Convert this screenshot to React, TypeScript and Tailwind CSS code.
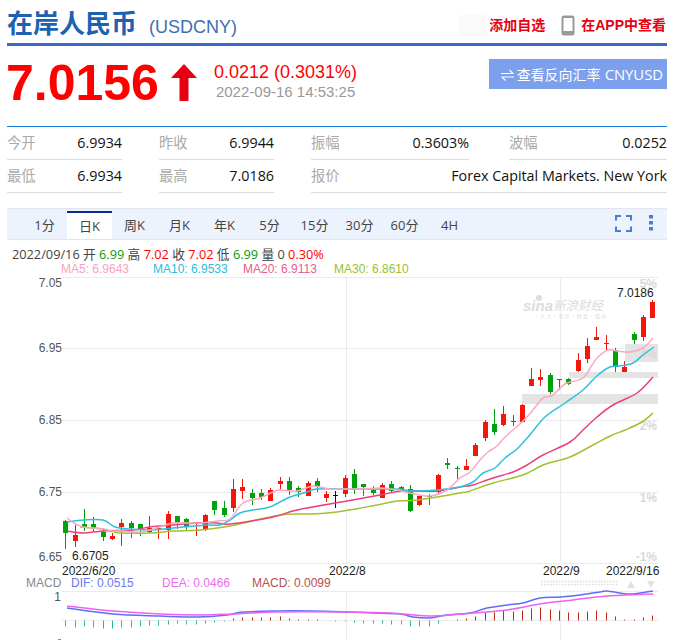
import React from 'react';

type Candle = [number, number, number, number, string];

const R = '#f5150a';
const G = '#00a10a';
const K = '#111111';

// body top, body bottom, wick top, wick bottom, colour (page pixels)
const candles: Candle[] = [
  [521, 533, 520, 549, G], [535, 541, 525, 547, R], [524, 528, 509, 531, G], [524, 528, 517, 532, G],
  [532, 537, 528, 541, G], [536, 539, 533, 540, R], [523, 527, 519, 546, R], [523, 528, 521, 538, G],
  [524, 529, 524, 536, G], [528, 532, 516, 533, R], [528, 530, 528, 539, R], [514, 530, 511, 539, R],
  [516, 523, 516, 529, G], [519, 527, 518, 531, G], [522, 523, 522, 536, R], [515, 530, 514, 531, R],
  [501, 510, 501, 515, G], [508, 515, 501, 517, G], [489, 508, 479, 512, R], [487, 491, 479, 499, R],
  [493, 498, 489, 505, G], [493, 497, 489, 500, G], [490, 501, 488, 501, R], [481, 484, 477, 489, R],
  [481, 490, 477, 495, G], [488, 492, 486, 497, G], [483, 496, 481, 496, R], [481, 486, 478, 492, G],
  [494, 498, 491, 502, R], [495, 496, 491, 508, K], [478, 494, 475, 497, R], [474, 490, 469, 494, G],
  [484, 487, 484, 496, G], [490, 493, 486, 495, G], [485, 498, 483, 498, R], [484, 491, 481, 492, G],
  [487, 491, 486, 492, G], [489, 511, 485, 512, G], [496, 505, 496, 506, R], [496, 497, 494, 505, G],
  [475, 492, 474, 493, R], [463, 465, 458, 469, G], [468, 469, 466, 479, G], [466, 470, 459, 470, R],
  [445, 456, 443, 456, R], [422, 438, 420, 441, R], [424, 432, 409, 435, G], [414, 425, 406, 426, R],
  [421, 422, 415, 426, R], [405, 422, 404, 422, R], [379, 386, 368, 386, R], [377, 380, 369, 386, R],
  [375, 392, 373, 394, G], [379, 380, 379, 390, R], [379, 384, 378, 385, G], [360, 371, 353, 372, R],
  [346, 359, 338, 363, R], [337, 340, 327, 340, R], [343, 344, 335, 350, R], [350, 366, 348, 372, G],
  [367, 372, 361, 372, R], [334, 340, 332, 344, G], [317, 337, 315, 341, R], [302, 318, 300, 318, R],
];

const ma5 = '67,518 74,523 83,527 93,528 103,529 113,531 123,531 140,532 150,530 160,527 173,523 200,523 217,521 230,519 243,503 260,498 273,492 280,490 297,491 313,486 330,489 347,489 363,489 380,488 397,490 410,493 430,496 447,490 460,478 470,472 480,460 488,452 497,446 505,437 522,422 533,410 543,398 553,395 565,384 583,378 592,365 598,357 608,350 617,351 630,352 643,348 653,338';
const ma10 = '67,522 83,520 103,520 115,527 130,529 150,530 183,527 207,525 220,525 230,520 240,513 253,510 270,507 290,497 307,492 317,489 347,489 373,489 397,489 413,491 437,490 460,487 473,482 483,473 495,468 505,458 517,449 528,437 545,417 565,403 583,390 598,375 610,367 620,366 633,363 643,355 654,347';
const ma20 = '67,531 83,533 103,531 133,530 150,527 173,525 200,523 217,523 230,524 273,517 297,510 347,501 380,495 403,491 437,491 460,487 473,485 490,479 513,472 527,465 543,455 570,442 583,430 597,417 613,405 637,393 653,377';
const ma30 = '80,527 103,529 120,533 150,533 173,531 200,530 230,526 280,515 310,514 337,512 377,505 397,501 417,500 460,493 470,491 493,483 523,475 543,465 570,457 593,445 610,436 625,430 642,422 653,413';
const dif = '67,608 113,614 160,616 198,617 227,615 243,612 277,611 310,611 347,612 373,613 400,614 413,617 430,618 447,615 470,613 487,608 507,605 523,603 540,598 560,597 580,595 600,592 607,591 627,594 640,593 653,591';
const dea = '67,606 113,611 160,614 200,615 233,614 277,612 340,612 390,613 433,616 473,613 507,610 540,604 573,600 607,596 653,594';

// macd bar heights, + is up (red), - is down (green)
const macd = [-6, -7, -6, -7, -8, -8, -7, -7, -6, -5, -5, -4, -3, -4, -4, -3, -2, -1, 2, 3, 3, 3, 3, 4, 2, 1, 1, 1, 0, -1, -1, -2, -3, -3, -3, -4, -4, -6, -6, -6, -3, 0, 1, 2, 4, 8, 8, 10, 9, 10, 12, 13, 11, 10, 8, 8, 9, 10, 8, 4, 1, 1, 3, 5];

const cx = (i: number) => Math.round(65.3 + 9.317 * i) + 0.5;

// catmull-rom through the sampled points, the lines in the chart are smoothed
function smooth(points: string) {
  const p = points.split(' ').map((s) => s.split(',').map(Number));
  let d = `M${p[0][0]} ${p[0][1]}`;
  for (let i = 0; i < p.length - 1; i++) {
    const a = p[Math.max(i - 1, 0)];
    const b = p[i];
    const c = p[i + 1];
    const e = p[Math.min(i + 2, p.length - 1)];
    const c1x = b[0] + (c[0] - a[0]) / 6;
    const c1y = b[1] + (c[1] - a[1]) / 6;
    const c2x = c[0] - (e[0] - b[0]) / 6;
    const c2y = c[1] - (e[1] - b[1]) / 6;
    d += `C${c1x.toFixed(1)} ${c1y.toFixed(1)} ${c2x.toFixed(1)} ${c2y.toFixed(1)} ${c[0]} ${c[1]}`;
  }
  return d;
}

const stats = [
  { label: '今开', value: '6.9934', label2: '最低', value2: '6.9934' },
  { label: '昨收', value: '6.9944', label2: '最高', value2: '7.0186' },
];

const tabs = ['1分', '日K', '周K', '月K', '年K', '5分', '15分', '30分', '60分', '4H'];

function Chart() {
  return (
    <svg width="681" height="363" viewBox="0 277 681 363" className="block font-['Liberation_Sans',sans-serif]">
      {/* grid */}
      {[277, 348, 420, 492, 563, 591, 620].map((y) => (
        <line key={y} x1="62" x2="658" y1={y + 0.5} y2={y + 0.5} stroke="#ebebeb" />
      ))}
      <line x1="346.5" x2="346.5" y1="277" y2="563" stroke="#ebebeb" />
      <line x1="560.5" x2="560.5" y1="277" y2="563" stroke="#ebebeb" />
      <line x1="346.5" x2="346.5" y1="591" y2="640" stroke="#ebebeb" />
      <line x1="560.5" x2="560.5" y1="591" y2="640" stroke="#ebebeb" />

      {/* shaded price bands */}
      <rect x="522" y="394" width="136" height="10" fill="#e4e4e4" />
      <rect x="569" y="372" width="89" height="6" fill="#e4e4e4" />
      <rect x="625" y="344" width="33" height="18" fill="#e4e4e4" />

      {/* watermark */}
      <g fill="#dcdcdc">
        <circle cx="539" cy="298" r="3" />
        <text x="523" y="311" fontSize="15" fontWeight="700" fontStyle="italic">sina</text>
        <text x="553" y="310" fontSize="12.5" fontStyle="italic" fontFamily="'Noto Sans CJK SC',sans-serif">新浪财经</text>
        <text x="534" y="318" fontSize="5" fontFamily="'Noto Sans CJK SC',sans-serif">· 大 大 · 资 讯 · 财 富 · 股 市</text>
      </g>

      {/* right percent axis */}
      <g fill="#d8d8d8" fontSize="12" fontWeight="700" textAnchor="end">
        <text x="657" y="288">5%</text>
        <text x="657" y="358">4%</text>
        <text x="657" y="430">2%</text>
        <text x="657" y="502">1%</text>
        <text x="657" y="561">-1%</text>
      </g>

      {/* left price axis */}
      <g fill="#555" fontSize="12" textAnchor="end">
        <text x="62" y="287">7.05</text>
        <text x="62" y="352">6.95</text>
        <text x="62" y="424">6.85</text>
        <text x="62" y="496">6.75</text>
        <text x="62" y="561">6.65</text>
        <text x="61" y="601">1</text>
      </g>
      <rect x="58" y="639" width="3" height="1" fill="#888" />

      {/* candles */}
      {candles.map(([t, b, h, l, c], i) => (
        <g key={i}>
          <line x1={cx(i)} x2={cx(i)} y1={h} y2={l} stroke={c} />
          <rect x={cx(i) - 2.5} y={t} width="5" height={b - t} fill={c} />
        </g>
      ))}

      <path d={smooth(ma30)} fill="none" stroke="#a2c12e" strokeWidth="1.5" />
      <path d={smooth(ma20)} fill="none" stroke="#ec4079" strokeWidth="1.5" />
      <path d={smooth(ma10)} fill="none" stroke="#2cc0de" strokeWidth="1.5" />
      <path d={smooth(ma5)} fill="none" stroke="#f9a9c4" strokeWidth="1.5" />

      {/* extremes */}
      <text x="617" y="297" fontSize="12" fill="#222">7.0186</text>
      <text x="72" y="560" fontSize="12" fill="#222">6.6705</text>

      {/* date axis */}
      <g fontSize="12" fill="#222">
        <text x="62" y="575">2022/6/20</text>
        <text x="329" y="575">2022/8</text>
        <text x="543" y="575">2022/9</text>
        <text x="606" y="575">2022/9/16</text>
      </g>

      {/* macd legend */}
      <g fontSize="12">
        <text x="26" y="587" fill="#888">MACD</text>
        <text x="71" y="587" fill="#6a78f0">DIF: 0.0515</text>
        <text x="162" y="587" fill="#ee6cf0">DEA: 0.0466</text>
        <text x="252" y="587" fill="#b55050">MACD: 0.0099</text>
      </g>

      {/* range slider bits */}
      <line x1="541" x2="617" y1="581.5" y2="581.5" stroke="#dcdcdc" strokeWidth="1.5" strokeDasharray="1.5 1.5" />
      <line x1="541" x2="617" y1="584.5" y2="584.5" stroke="#dcdcdc" strokeWidth="1.5" strokeDasharray="1.5 1.5" />
      <polygon points="631,581 635,588 627,588" fill="#e2e2e2" />
      <polygon points="647,581 655,581 651,588" fill="#e2e2e2" />

      {/* macd */}
      {macd.map((v, i) =>
        v === 0 ? null : (
          <line
            key={i}
            x1={cx(i)}
            x2={cx(i)}
            y1="620.5"
            y2={620.5 - v}
            stroke={v > 0 ? '#c0280f' : '#20c08a'}
          />
        ),
      )}
      <path d={smooth(dif)} fill="none" stroke="#5f6ef5" strokeWidth="1.5" />
      <path d={smooth(dea)} fill="none" stroke="#f062f0" strokeWidth="1.5" />
    </svg>
  );
}

export default function App() {
  return (
    <div className="w-[681px] h-[640px] overflow-hidden bg-white font-['Liberation_Sans','Noto_Sans_CJK_SC',sans-serif]">
      {/* title */}
      <div className="mx-[7px] w-[660px] h-[46px] border-b-[3px] border-[#3b69c7] flex items-center">
        <span className="text-[26px] leading-none font-bold text-[#1c61b2] font-['Noto_Sans_CJK_SC',sans-serif]">在岸人民币</span>
        <span className="ml-[12px] mt-[12px] text-[18px] text-[#3f6fb0]">(USDCNY)</span>
        <div className="ml-auto mt-[7px] flex items-center">
          <div className="w-[28px] h-[21px] bg-[#fafafa]" />
          <span className="ml-[2px] text-[14px] font-bold text-[#e60012]">添加自选</span>
          <svg width="14" height="21" viewBox="0 0 14 21" className="ml-[16px]">
            <rect x="0.5" y="0.5" width="13" height="20" rx="2.5" fill="#999" />
            <rect x="2.5" y="3" width="9" height="13" fill="#fff" />
          </svg>
          <span className="ml-[6px] mr-[1px] text-[14px] font-bold text-[#e60012]">在APP中查看</span>
        </div>
      </div>

      {/* quote */}
      <div className="mx-[7px] w-[660px] h-[80px] flex items-start">
        <span className="-ml-[1px] mt-[9px] text-[50px] leading-[56px] font-bold text-[#ff0000]">7.0156</span>
        <svg width="26" height="38" viewBox="0 0 26 38" className="ml-[12px] mt-[18px]">
          <polygon points="13,0 26,14 17.5,14 17.5,37 8.5,37 8.5,14 0,14" fill="#e60012" />
        </svg>
        <div className="ml-[17px] mt-[16px]">
          <div className="text-[18px] leading-[20px] text-[#ff0000]">0.0212 (0.3031%)</div>
          <div className="ml-[2px] text-[15px] leading-[20px] text-[#999999]">2022-09-16 14:53:25</div>
        </div>
        <div className="ml-auto mt-[13px] w-[178px] h-[30px] bg-[#7ca0ec] flex items-center justify-end pr-[4px] text-[14px] text-white font-['Open_Sans','Noto_Sans_CJK_SC',sans-serif]">
          <svg width="13" height="12" viewBox="0 0 13 12" className="mr-[3px] mt-[2px]">
            <path d="M0 4.5H12L8.5 1M13 8H1L4.5 11.5" fill="none" stroke="#fff" strokeWidth="1.2" />
          </svg>
          查看反向汇率 <span className="ml-[4px] text-[14.8px]">CNYUSD</span>
        </div>
      </div>

      {/* stats */}
      <div className="mx-[7px] w-[660px] border-t border-[#1f7fd8] text-[14.3px] font-['Open_Sans','Noto_Sans_CJK_SC',sans-serif]">
        <div className="flex h-[33px]">
          {stats.map((s) => (
            <div key={s.label} className="w-[115px] mr-[37px] flex items-center justify-between border-b border-[#dddddd]">
              <span className="text-[#aaaaaa]">{s.label}</span>
              <span className="text-[#111111]">{s.value}</span>
            </div>
          ))}
          <div className="w-[158px] mr-[40px] flex items-center justify-between border-b border-[#dddddd]">
            <span className="text-[#aaaaaa]">振幅</span>
            <span className="text-[#111111]">0.3603%</span>
          </div>
          <div className="w-[158px] flex items-center justify-between border-b border-[#dddddd]">
            <span className="text-[#aaaaaa]">波幅</span>
            <span className="text-[#111111]">0.0252</span>
          </div>
        </div>
        <div className="flex h-[33px]">
          {stats.map((s) => (
            <div key={s.label2} className="w-[115px] mr-[37px] flex items-center justify-between border-b border-[#dddddd]">
              <span className="text-[#aaaaaa]">{s.label2}</span>
              <span className="text-[#111111]">{s.value2}</span>
            </div>
          ))}
          <div className="flex-1 flex items-center justify-between border-b border-[#dddddd]">
            <span className="text-[#aaaaaa]">报价</span>
            <span className="text-[#111111]">Forex Capital Markets. New York</span>
          </div>
        </div>
      </div>

      {/* tabs */}
      <div className="mx-[7px] mt-[15px] w-[660px] h-[32px] bg-[#edf3fc] border-t border-b border-[#dfe6f0] flex items-end pl-[15px] text-[13px] text-[#444444] font-['Open_Sans','Noto_Sans_CJK_SC',sans-serif]">
        {tabs.map((t) => (
          <div
            key={t}
            className={
              t === '日K'
                ? 'w-[45px] h-[28px] pt-[2px] bg-white border-t-2 border-[#0b2a8c] flex items-center justify-center'
                : 'w-[45px] h-[28px] pt-[2px] flex items-center justify-center'
            }
          >
            {t}
          </div>
        ))}
        <div className="ml-auto mr-[14px] h-[30px] flex items-center gap-[17px]">
          <svg width="17" height="17" viewBox="0 0 17 17" className="-mt-[2px]">
            <path d="M1 5.5V1H6M11 1H16V5.5M16 11.5V16H11M6 16H1V11.5" fill="none" stroke="#4a7fd0" strokeWidth="2" />
          </svg>
          <svg width="4" height="16" viewBox="0 0 4 16" className="-mt-[2px]">
            <rect x="0" y="0" width="4" height="3.5" fill="#4a7fd0" />
            <rect x="0" y="6" width="4" height="3.5" fill="#4a7fd0" />
            <rect x="0" y="12" width="4" height="3.5" fill="#4a7fd0" />
          </svg>
        </div>
      </div>

      {/* ohlc legend */}
      <div className="pl-[12px] h-[15px] mt-[7px] text-[12.75px] leading-[15px] whitespace-nowrap text-[#444444] font-['Open_Sans','Noto_Sans_CJK_SC',sans-serif]">
        2022/09/16 开 <span className="text-[#0a9a0a]">6.99</span> 高 <span className="text-[#ff0000]">7.02</span> 收{' '}
        <span className="text-[#ff0000]">7.02</span> 低 <span className="text-[#0a9a0a]">6.99</span> 量 0{' '}
        <span className="text-[#ff0000]">0.30%</span>
      </div>
      <div className="flex pl-[61px] h-[15px] text-[12px] leading-[15px] whitespace-nowrap">
        <span className="w-[92px] text-[#f9a0c0]">MA5: 6.9643</span>
        <span className="w-[90px] text-[#2cbcdc]">MA10: 6.9533</span>
        <span className="w-[91px] text-[#ec5a8c]">MA20: 6.9113</span>
        <span className="text-[#9fc02c]">MA30: 6.8610</span>
      </div>

      <Chart />
    </div>
  );
}
